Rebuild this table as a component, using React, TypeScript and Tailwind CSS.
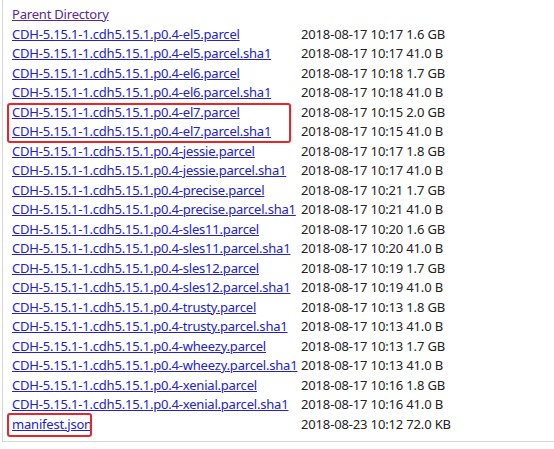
import React from 'react';

const rows: [string, string][] = [
  ['CDH-5.15.1-1.cdh5.15.1.p0.4-el5.parcel', '2018-08-17 10:17 1.6 GB'],
  ['CDH-5.15.1-1.cdh5.15.1.p0.4-el5.parcel.sha1', '2018-08-17 10:17 41.0 B'],
  ['CDH-5.15.1-1.cdh5.15.1.p0.4-el6.parcel', '2018-08-17 10:18 1.7 GB'],
  ['CDH-5.15.1-1.cdh5.15.1.p0.4-el6.parcel.sha1', '2018-08-17 10:18 41.0 B'],
  ['CDH-5.15.1-1.cdh5.15.1.p0.4-el7.parcel', '2018-08-17 10:15 2.0 GB'],
  ['CDH-5.15.1-1.cdh5.15.1.p0.4-el7.parcel.sha1', '2018-08-17 10:15 41.0 B'],
  ['CDH-5.15.1-1.cdh5.15.1.p0.4-jessie.parcel', '2018-08-17 10:17 1.8 GB'],
  ['CDH-5.15.1-1.cdh5.15.1.p0.4-jessie.parcel.sha1', '2018-08-17 10:17 41.0 B'],
  ['CDH-5.15.1-1.cdh5.15.1.p0.4-precise.parcel', '2018-08-17 10:21 1.7 GB'],
  ['CDH-5.15.1-1.cdh5.15.1.p0.4-precise.parcel.sha1', '2018-08-17 10:21 41.0 B'],
  ['CDH-5.15.1-1.cdh5.15.1.p0.4-sles11.parcel', '2018-08-17 10:20 1.6 GB'],
  ['CDH-5.15.1-1.cdh5.15.1.p0.4-sles11.parcel.sha1', '2018-08-17 10:20 41.0 B'],
  ['CDH-5.15.1-1.cdh5.15.1.p0.4-sles12.parcel', '2018-08-17 10:19 1.7 GB'],
  ['CDH-5.15.1-1.cdh5.15.1.p0.4-sles12.parcel.sha1', '2018-08-17 10:19 41.0 B'],
  ['CDH-5.15.1-1.cdh5.15.1.p0.4-trusty.parcel', '2018-08-17 10:13 1.8 GB'],
  ['CDH-5.15.1-1.cdh5.15.1.p0.4-trusty.parcel.sha1', '2018-08-17 10:13 41.0 B'],
  ['CDH-5.15.1-1.cdh5.15.1.p0.4-wheezy.parcel', '2018-08-17 10:13 1.7 GB'],
  ['CDH-5.15.1-1.cdh5.15.1.p0.4-wheezy.parcel.sha1', '2018-08-17 10:13 41.0 B'],
  ['CDH-5.15.1-1.cdh5.15.1.p0.4-xenial.parcel', '2018-08-17 10:16 1.8 GB'],
  ['CDH-5.15.1-1.cdh5.15.1.p0.4-xenial.parcel.sha1', '2018-08-17 10:16 41.0 B'],
  ['manifest.json', '2018-08-23 10:12 72.0 KB'],
];

const App = () => {
  return (
    <div className="relative w-[554px] h-[449px] bg-white overflow-hidden font-['Noto_Sans',sans-serif] text-[13px] tracking-[-0.2px]">
      <div className="ml-[2px] h-[442px] border-l border-b border-[#d6d6d6] pl-[9px] pt-[5px]">
        <div className="h-[19.5px] leading-[19.5px]">
          <a href="#" className="text-[#5a2a8c] underline">Parent Directory</a>
        </div>
        {rows.map(([name, info]) => (
          <div key={name} className="flex h-[19.5px] leading-[19.5px] whitespace-nowrap">
            <div className="w-[289px] shrink-0">
              <a href="#" className="text-[#2222c6] underline">{name}</a>
            </div>
            <div className="text-[#222] tracking-[-0.15px]">{info}</div>
          </div>
        ))}
      </div>

      {/* red annotation boxes */}
      <div className="absolute left-[7px] top-[103px] w-[284px] h-[40px] border-2 border-[#e8262a] rounded-[3px]" />
      <div className="absolute left-[7px] top-[413px] w-[85px] h-[24px] border-2 border-[#e8262a] rounded-[3px]" />
    </div>
  );
};

export default App;
